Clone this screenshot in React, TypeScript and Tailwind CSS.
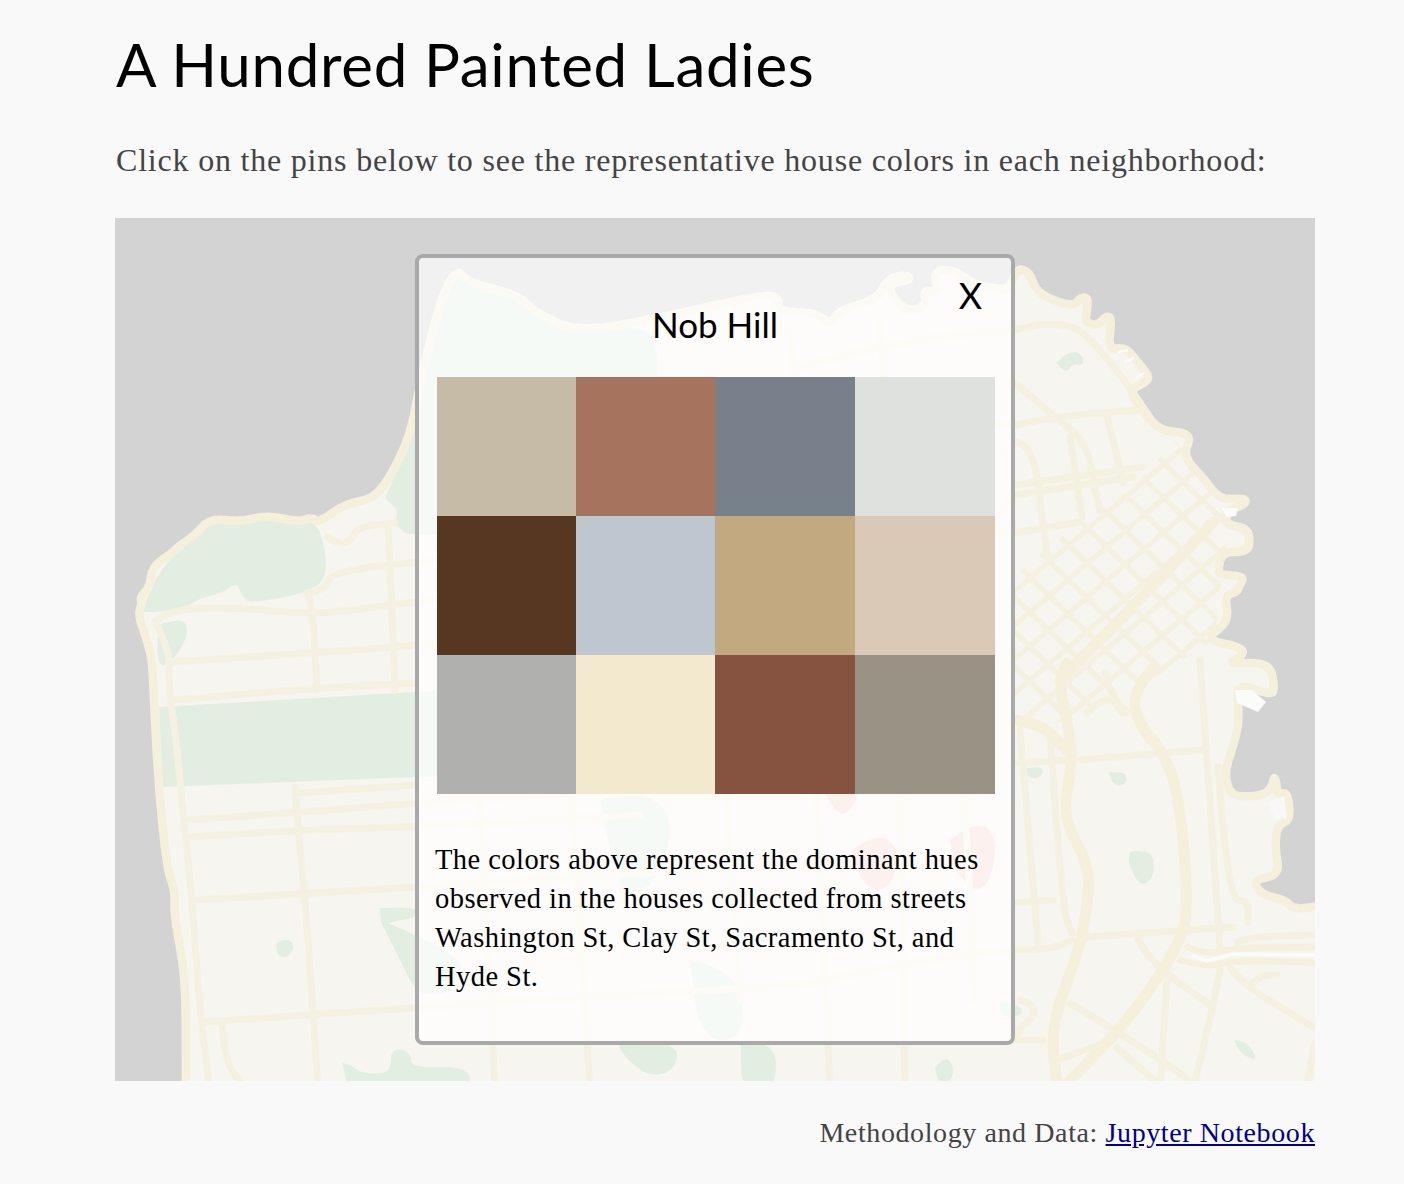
type Pt = [number, number];

// turns a list of points into a smooth line
function smooth(pts: Pt[], close = false) {
  let d = `M${pts[0][0]} ${pts[0][1]}`;
  for (let i = 1; i < pts.length - 1; i++) {
    const mx = (pts[i][0] + pts[i + 1][0]) / 2;
    const my = (pts[i][1] + pts[i + 1][1]) / 2;
    d += ` Q${pts[i][0]} ${pts[i][1]} ${mx} ${my}`;
  }
  const last = pts[pts.length - 1];
  d += ` L${last[0]} ${last[1]}`;
  return close ? d + " Z" : d;
}

const coast: Pt[] = [
  [186, 1090], [186, 1040], [185, 980], [180, 947], [174, 913], [175, 890], [167, 870], [158, 780], [153, 680],
  [152, 660], [147, 640], [138, 615], [142, 603], [140, 597], [150, 587], [152, 567], [172, 553], [180, 545],
  [193, 537], [210, 518], [240, 522], [267, 515], [297, 522], [313, 517], [318, 523], [347, 503], [370, 500],
  [387, 483], [410, 437], [420, 383], [440, 300], [457, 268], [468, 283], [519, 295], [534, 312], [577, 332],
  [651, 320], [768, 293], [780, 300], [776, 308], [791, 312], [815, 313], [832, 325], [838, 310], [877, 300],
  [889, 277], [908, 275], [910, 280], [892, 283], [889, 293], [908, 313], [927, 305], [923, 290], [939, 293],
  [933, 270], [955, 270], [974, 285], [994, 288], [1009, 290], [1017, 268], [1030, 272], [1036, 292], [1060, 303],
  [1075, 305], [1080, 298], [1088, 297], [1087, 312], [1085, 322], [1097, 326], [1106, 316], [1112, 318], [1108, 350],
  [1126, 347], [1140, 365], [1152, 380], [1128, 390], [1142, 410], [1155, 425], [1165, 431], [1186, 433], [1190, 440],
  [1185, 450], [1188, 462], [1205, 480], [1220, 500], [1246, 498], [1245, 505], [1228, 510], [1225, 525], [1248, 528],
  [1250, 545], [1245, 552], [1222, 552], [1218, 570], [1220, 575], [1244, 576], [1240, 585], [1237, 592], [1225, 595],
  [1228, 615], [1224, 625], [1205, 640], [1245, 648], [1240, 658], [1228, 664], [1270, 662], [1275, 690], [1270, 695],
  [1235, 682], [1240, 720], [1232, 750], [1225, 770], [1228, 790], [1237, 797], [1270, 795], [1275, 772], [1278, 798],
  [1287, 790], [1291, 820], [1277, 825], [1275, 850], [1280, 875], [1252, 880], [1262, 895], [1285, 900], [1295, 910],
  [1325, 905],
];

const parks: Pt[][] = [
  [[143, 612], [150, 585], [175, 553], [195, 536], [215, 520], [260, 516], [297, 520], [320, 523], [329, 577], [307, 593], [253, 603], [243, 599], [237, 582], [223, 593], [200, 598], [187, 607], [160, 612]],
  [[158, 625], [185, 616], [188, 637], [173, 661], [157, 668]],
  [[385, 498], [412, 437], [422, 383], [442, 300], [457, 272], [468, 287], [519, 298], [534, 315], [577, 335], [651, 323], [660, 370], [650, 535], [420, 535], [402, 533], [395, 520], [398, 510]],
  [[276, 943], [286, 938], [295, 945], [290, 955], [285, 958], [277, 955]],
  [[380, 908], [417, 906], [417, 918], [388, 922], [384, 928], [380, 918]],
  [[342, 1063], [350, 1064], [360, 1073], [385, 1074], [391, 1066], [391, 1052], [400, 1048], [411, 1054], [412, 1068], [470, 1066], [470, 1095], [350, 1095]],
  [[1056, 363], [1070, 350], [1083, 355], [1083, 366], [1073, 364], [1066, 373]],
  [[1027, 768], [1044, 766], [1042, 776], [1033, 779], [1027, 776]],
  [[1109, 772], [1125, 772], [1127, 780], [1122, 787], [1112, 783]],
  [[1130, 852], [1152, 848], [1155, 875], [1143, 886], [1135, 878], [1128, 862]],
  [[1234, 1040], [1245, 1040], [1256, 1055], [1254, 1060], [1240, 1053]],
  [[1000, 1002], [1022, 1005], [1022, 1016], [1000, 1018]],
  [[616, 1040], [678, 1040], [676, 1070], [650, 1077], [625, 1058]],
  [[741, 1040], [776, 1040], [776, 1090], [741, 1090]],
  [[935, 1068], [945, 1055], [955, 1068], [950, 1082], [938, 1082]],
  [[600, 800], [640, 790], [675, 815], [660, 880], [625, 900], [610, 850]],
  [[380, 920], [455, 950], [470, 985], [420, 1000], [400, 960]],
  [[690, 960], [740, 970], [745, 1040], [700, 1040]],
];

const blush: Pt[][] = [
  [[822, 790], [862, 790], [850, 812], [838, 815]],
  [[852, 850], [875, 833], [898, 845], [895, 880], [878, 893], [860, 880]],
  [[950, 840], [975, 820], [997, 835], [992, 880], [975, 893], [955, 870]],
];

const roads: Pt[][] = [
  // sunset and richmond
  [[155, 622], [167, 610], [233, 607], [313, 615], [390, 605], [430, 600], [700, 570]],
  [[155, 622], [170, 650], [168, 680], [177, 747], [183, 813], [192, 897], [200, 1013], [210, 1090]],
  [[172, 662], [313, 653], [393, 647], [700, 625]],
  [[173, 700], [313, 688], [417, 683]],
  [[308, 593], [313, 610], [317, 690]],
  [[388, 527], [392, 610], [395, 690]],
  [[307, 593], [327, 590], [330, 572], [430, 560], [640, 545]],
  [[327, 537], [340, 545], [352, 540], [357, 527], [395, 523]],
  [[185, 820], [293, 813], [417, 803], [620, 790]],
  [[187, 837], [297, 830], [417, 827], [640, 815]],
  [[295, 787], [300, 850], [305, 900], [313, 1010], [318, 1090]],
  [[300, 793], [417, 785]],
  [[195, 900], [417, 887], [700, 870]],
  [[205, 1022], [417, 1007], [800, 985]],
  [[222, 1023], [225, 1063], [243, 1085]],
  // under the popup
  [[470, 610], [480, 800], [495, 1090]],
  [[560, 600], [575, 850], [590, 1090]],
  [[700, 400], [720, 700], [740, 1000]],
  [[790, 330], [810, 650], [830, 1090]],
  [[880, 320], [900, 700], [905, 1090]],
  [[700, 570], [850, 550], [1015, 530]],
  [[700, 440], [850, 425], [1015, 425]],
  [[790, 370], [900, 340], [1015, 330]],
  [[800, 985], [920, 960], [1015, 950]],
  [[920, 440], [960, 700], [975, 1000]],
  // north beach to the embarcadero
  [[1015, 330], [1066, 316], [1105, 355], [1135, 395], [1155, 425]],
  [[1015, 383], [1053, 415], [1087, 443], [1093, 483], [1100, 510]],
  [[1015, 425], [1053, 417], [1137, 410]],
  [[1107, 417], [1115, 447], [1123, 483]],
  [[1070, 437], [1082, 517]],
  [[1015, 442], [1033, 443], [1043, 527], [1048, 557]],
  [[1015, 485], [1143, 467]],
  [[1015, 495], [1133, 477]],
  [[1015, 533], [1080, 522]],
  // south of market
  [[1080, 760], [1200, 750]],
  [[1015, 763], [1067, 760]],
  [[1015, 903], [1053, 900]],
  [[1020, 730], [1038, 943]],
  [[1050, 737], [1062, 907], [1072, 933]],
  [[1015, 950], [1050, 950], [1072, 940]],
  [[1087, 937], [1233, 927]],
  [[1137, 937], [1147, 960], [1213, 1007]],
  [[1200, 660], [1220, 947]],
  [[1218, 767], [1228, 900], [1248, 900], [1248, 922]],
  [[1237, 943], [1243, 937], [1315, 935]],
  [[1230, 967], [1240, 983], [1315, 1028]],
  [[1220, 970], [1213, 1007], [1193, 1090]],
  [[1167, 980], [1160, 1090]],
  [[1070, 1003], [1180, 1070], [1195, 1090]],
  [[1057, 1060], [1113, 1040]],
  [[1117, 1048], [1160, 1085]],
  [[1252, 983], [1263, 975], [1277, 975]],
  [[1087, 713], [1107, 693], [1123, 713]],
  [[1105, 673], [1110, 693], [1127, 713]],
  [[1307, 1085], [1315, 1043]],
  [[1020, 1000], [1035, 1005], [1033, 1018], [1020, 1027], [1017, 1038]],
  [[1015, 1040], [1043, 1040]],
];

const highways: Pt[][] = [
  [[1067, 663], [1057, 680], [1070, 733], [1072, 767], [1062, 817], [1090, 867], [1087, 910], [1078, 953], [1050, 1027], [1058, 1090]],
  [[1153, 668], [1133, 690], [1137, 723], [1170, 760], [1183, 827], [1188, 917], [1177, 947], [1150, 990], [1113, 1037], [1060, 1090]],
  [[1015, 720], [1040, 723], [1067, 750]],
  [[1060, 680], [1140, 600], [1213, 522]],
];

const bridge: Pt[][] = [
  [[1187, 947], [1207, 955], [1233, 948], [1325, 947]],
  [[1180, 960], [1207, 968], [1233, 960], [1325, 963]],
];

// diagonal street grid of downtown
const gridLines = Array.from({ length: 12 }, (_, i) => i);

const swatches = [
  "bg-[#c6bba6]", "bg-[#a6735e]", "bg-[#78818b]", "bg-[#dfe1df]",
  "bg-[#573722]", "bg-[#bec7d0]", "bg-[#c3a980]", "bg-[#dbc9b8]",
  "bg-[#b0b1ae]", "bg-[#f3e9cf]", "bg-[#85533f]", "bg-[#9b9286]",
];

function SfMap() {
  return (
    <svg viewBox="115 218 1200 863" className="block w-full h-full">
      <defs>
        <filter id="soft" x="-2%" y="-2%" width="104%" height="104%">
          <feGaussianBlur stdDeviation="0.6" />
        </filter>
        <clipPath id="downtown">
          <polygon points="1015,720 1015,575 1070,530 1130,490 1175,440 1205,480 1235,510 1222,570 1215,640 1150,680 1075,715 1040,730" />
        </clipPath>
      </defs>
      <g filter="url(#soft)">
        <path d={smooth(coast) + " L1330 905 L1330 1100 L186 1100 Z"} fill="#f7f5ef" />
        {parks.map((p, i) => (
          <path key={i} d={smooth(p.concat([p[0]]), true)} fill="#e3eee2" />
        ))}
        <polygon points="159,707 417,692 610,682 610,772 417,777 163,787" fill="#e3eee2" />
        {blush.map((p, i) => (
          <path key={i} d={smooth(p.concat([p[0]]), true)} fill="#f8d4cf" />
        ))}
        <g clipPath="url(#downtown)" stroke="#f5f1e0" strokeWidth="5.5" fill="none">
          {gridLines.map((i) => (
            <line key={i} x1={990} y1={510 + i * 34} x2={1290} y2={255 + i * 34} />
          ))}
          {gridLines.map((i) => (
            <line key={i} x1={1000 + i * 36 - 220} y1={440} x2={1000 + i * 36 + 80} y2={730} />
          ))}
        </g>
        {roads.map((p, i) => (
          <path key={i} d={smooth(p)} fill="none" stroke="#f5f1e0" strokeWidth="7" strokeLinecap="round" strokeLinejoin="round" />
        ))}
        {highways.map((p, i) => (
          <path key={i} d={smooth(p)} fill="none" stroke="#f5f0dc" strokeWidth="11" strokeLinecap="round" strokeLinejoin="round" />
        ))}
        {bridge.map((p, i) => (
          <path key={i} d={smooth(p)} fill="none" stroke="#f5f0dc" strokeWidth="6.5" strokeLinecap="round" strokeLinejoin="round" />
        ))}
        <path d={smooth(coast)} fill="none" stroke="#f5f0dc" strokeWidth="8.5" strokeLinejoin="round" strokeLinecap="round" />
        <path d="M1192 955 L1207 961 L1233 954 L1315 955" fill="none" stroke="#fbfbf9" strokeWidth="3.5" />
        <path d="M1235 690 L1252 690 L1266 702 L1258 712 L1237 703 Z" fill="#fbfbfa" />
        <path d="M1267 802 L1284 796 L1287 818 L1275 819 Z" fill="#f8f8f7" />
        <path d="M1222 508 L1238 508 L1236 516 L1226 517 Z" fill="#fbfbfa" />
        <path d="M1118 352 L1128 350 M1124 362 L1134 358 M1136 378 L1144 373" stroke="#fbfbfa" strokeWidth="2.5" fill="none" />
      </g>
    </svg>
  );
}

export default function App() {
  return (
    <div className="min-h-[1184px] bg-[#f9f9f9] pl-[115px] font-['Liberation_Serif',serif]">
      <div className="w-[1200px]">
        <h1 className="pt-[26px] pl-[1px] font-['Lato',sans-serif] text-[60px] leading-[76px] font-normal tracking-[0.7px] text-black">
          A Hundred Painted Ladies
        </h1>
        <p className="mt-[38px] pl-[1px] text-[32px] leading-[40px] tracking-[0.8px] whitespace-nowrap text-[#444]">
          Click on the pins below to see the representative house colors in each neighborhood:
        </p>
        <div className="relative mt-[38px] h-[863px] w-[1200px] overflow-hidden bg-[#d3d3d3]">
          <SfMap />
          <div className="absolute left-[300px] top-[36px] h-[791px] w-[600px] rounded-[8px] border-4 border-[#a9a9a9] bg-white/[0.68] px-[16px]">
            <button className="absolute right-[29px] top-[15px] font-['Lato',sans-serif] text-[36px] leading-[44px] text-black">X</button>
            <h2 className="mt-[44px] text-center font-['Lato',sans-serif] text-[35px] leading-[44px] text-black">Nob Hill</h2>
            <div className="mt-[31px] ml-[2px] grid h-[417px] w-[558px] grid-cols-[139px_139px_140px_140px] grid-rows-3">
              {swatches.map((c) => (
                <div key={c} className={c}></div>
              ))}
            </div>
            <p className="mt-[46px] w-[560px] text-[28.5px] leading-[39px] tracking-[0.45px] text-black">
              The colors above represent the dominant hues observed in the houses collected from streets Washington St, Clay St, Sacramento St, and Hyde St.
            </p>
          </div>
        </div>
        <p className="mt-[32px] text-right text-[28px] leading-[40px] tracking-[0.6px] text-[#444]">
          Methodology and Data: <a href="#" className="text-[#00008b] underline">Jupyter Notebook</a>
        </p>
      </div>
    </div>
  );
}
